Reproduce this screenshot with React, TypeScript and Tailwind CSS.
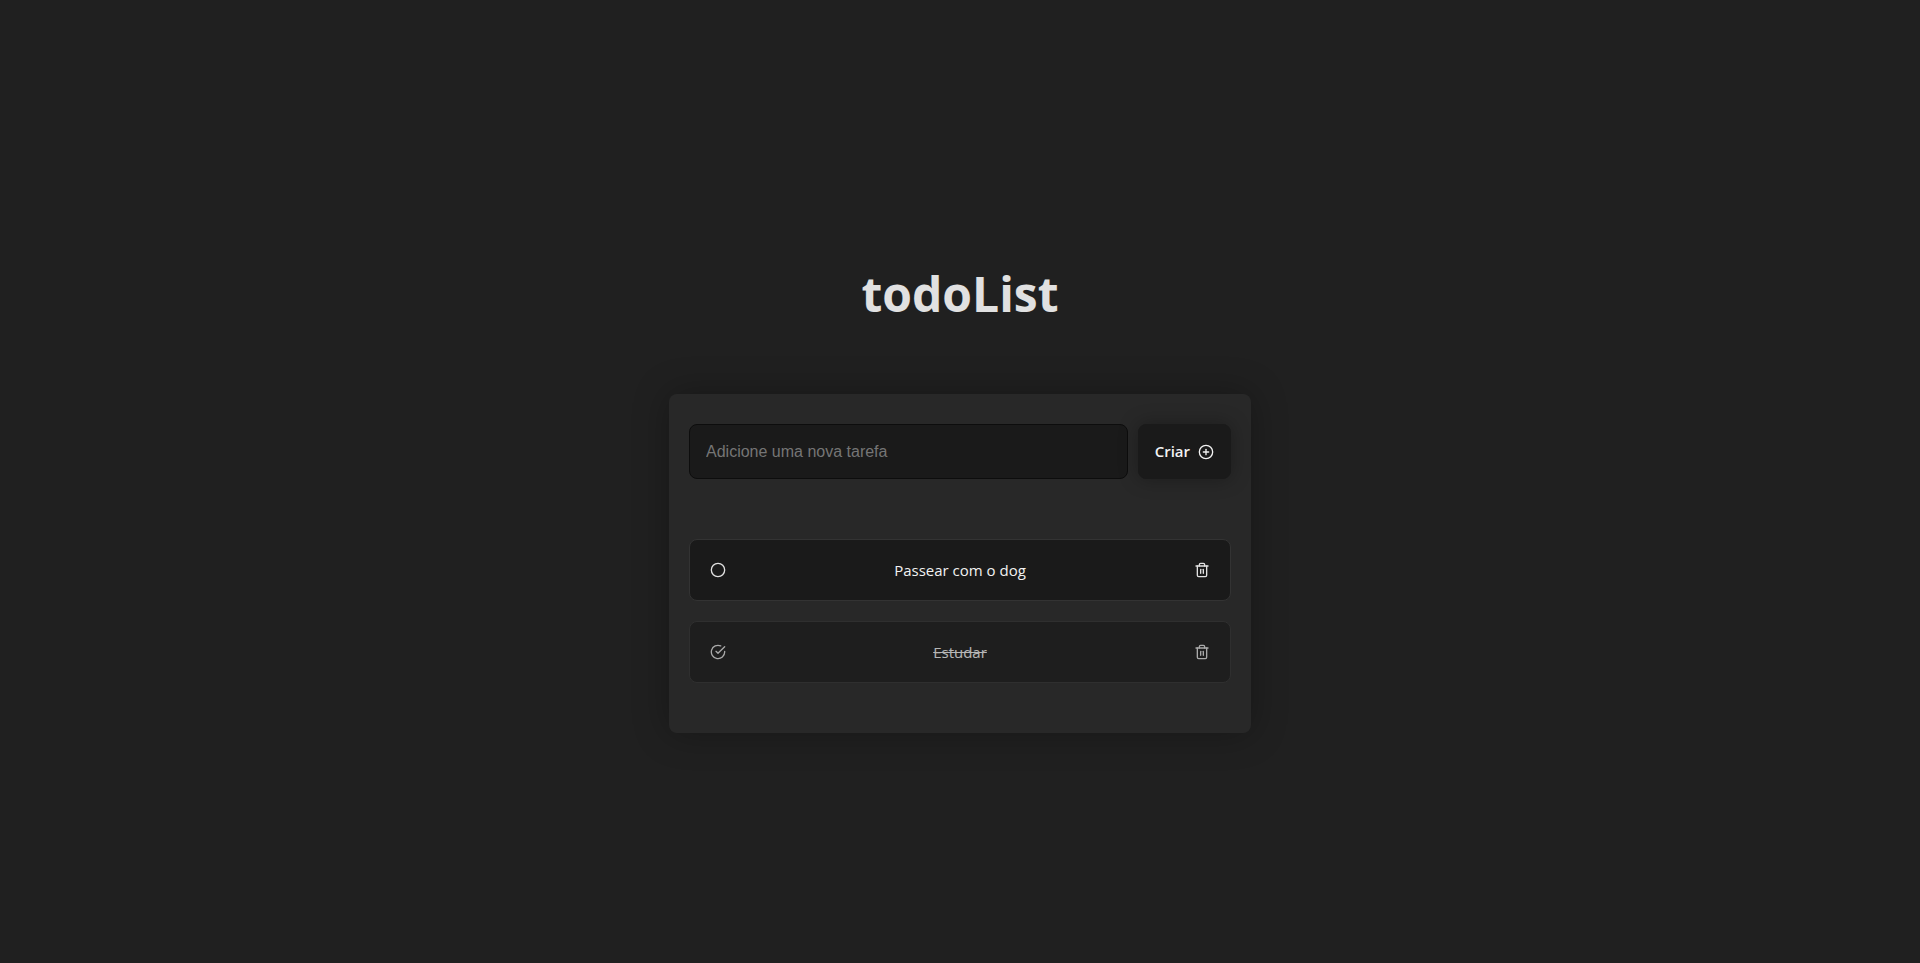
import { useState } from "react";
import type { FormEvent } from "react";
import { FiCheckCircle, FiCircle, FiPlusCircle, FiTrash2 } from "react-icons/fi";

interface Task {
  id: number;
  title: string;
  done: boolean;
}

const initialTasks: Task[] = [
  { id: 1, title: "Passear com o dog", done: false },
  { id: 2, title: "Estudar", done: true },
];

interface TaskItemProps {
  task: Task;
  onToggle: (id: number) => void;
  onRemove: (id: number) => void;
}

function TaskItem({ task, onToggle, onRemove }: TaskItemProps) {
  return (
    <li
      className={`flex items-center justify-between rounded-lg border border-[#333333] bg-[#1a1a1a] px-5 py-[18px] ${
        task.done ? "opacity-70" : ""
      }`}
    >
      <button
        type="button"
        aria-label={task.done ? "Reabrir tarefa" : "Concluir tarefa"}
        className="cursor-pointer"
        onClick={() => onToggle(task.id)}
      >
        {task.done ? <FiCheckCircle size={16} /> : <FiCircle size={16} />}
      </button>
      <p className={`text-center text-[15px] leading-6 text-[#f2f2f2] ${task.done ? "line-through" : ""}`}>
        {task.title}
      </p>
      <button
        type="button"
        aria-label="Excluir tarefa"
        className="cursor-pointer"
        onClick={() => onRemove(task.id)}
      >
        <FiTrash2 size={16} />
      </button>
    </li>
  );
}

export default function App() {
  const [tasks, setTasks] = useState<Task[]>(initialTasks);
  const [title, setTitle] = useState("");

  function handleSubmit(event: FormEvent) {
    event.preventDefault();
    if (!title.trim()) return;
    setTasks([...tasks, { id: Date.now(), title, done: false }]);
    setTitle("");
  }

  return (
    <div className="flex min-h-screen flex-col items-center justify-center gap-16 bg-[#202020] px-4 pt-7 font-['Open_Sans','Noto_Sans',sans-serif] text-[#e1e1e1]">
      <h1 className="text-5xl leading-[72px] font-bold">todoList</h1>

      <main className="w-full max-w-[582px] rounded-lg bg-[#282828] px-5 pt-[30px] pb-[50px] shadow-[0_0_36px_rgba(0,0,0,0.3)]">
        <form className="flex gap-2.5" onSubmit={handleSubmit}>
          <input
            type="text"
            aria-label="Nova tarefa"
            placeholder="Adicione uma nova tarefa"
            value={title}
            onChange={(event) => setTitle(event.target.value)}
            className="h-[55px] min-w-0 flex-1 rounded-lg border border-[#0d0d0d] bg-[#1a1a1a] px-4 font-['Liberation_Sans',Arial,sans-serif] text-base outline-none placeholder:text-[#757575]"
          />
          <button
            type="submit"
            className="flex cursor-pointer items-center gap-2 rounded-lg border border-[#1a1a1a] bg-[#1a1a1a] px-4 text-[15px] font-semibold text-[#f2f2f2] shadow-[0_0_20px_rgba(0,0,0,0.3)]"
          >
            Criar
            <FiPlusCircle size={16} />
          </button>
        </form>

        <ul className="mt-[60px] flex flex-col gap-5">
          {tasks.map((task) => (
            <TaskItem
              key={task.id}
              task={task}
              onToggle={(id) =>
                setTasks(tasks.map((item) => (item.id === id ? { ...item, done: !item.done } : item)))
              }
              onRemove={(id) => setTasks(tasks.filter((item) => item.id !== id))}
            />
          ))}
        </ul>
      </main>
    </div>
  );
}
